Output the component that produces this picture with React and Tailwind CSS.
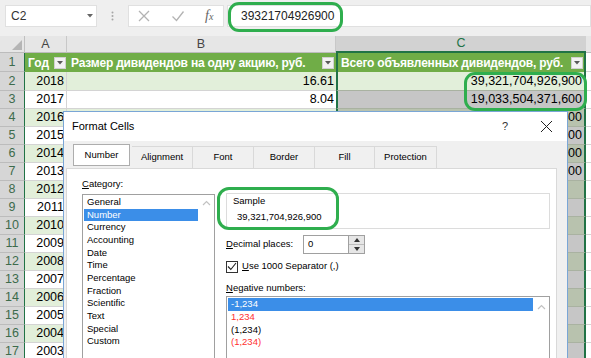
import React from 'react';

const data = [
  ['2018', '16.61', '39,321,704,926,900'],
  ['2017', '8.04', '19,033,504,371,600'],
  ['2016', '8.04', '19,032,795,363,600'],
  ['2015', '7.89', '18,678,401,678,100'],
  ['2014', '7.20', '17,044,929,288,000'],
  ['2013', '7.20', '17,044,929,288,000'],
  ['2012', '5.99', ''],
  ['2011', '8.97', ''],
  ['2010', '3.85', ''],
  ['2009', '2.39', ''],
  ['2008', '0.36', ''],
  ['2007', '2.66', ''],
  ['2006', '2.54', ''],
  ['2005', '1.50', ''],
  ['2004', '1.19', ''],
  ['2003', '0.69', ''],
];

function FilterBtn() {
  return (
    <div className="w-[12px] h-[12px] bg-[#f2f2f2] border border-[#d0d0d0] flex items-center justify-center shrink-0">
      <svg width="6" height="4" viewBox="0 0 6 4"><path d="M0 0h6L3 3.5z" fill="#595959" /></svg>
    </div>
  );
}

function UpChevron() {
  return (
    <svg width="9" height="6" viewBox="0 0 9 6"><path d="M1 5l3.5-3.5L8 5" fill="none" stroke="#c2c2c2" strokeWidth="1.2" /></svg>
  );
}

function Row({ n, year, b, c, h }) {
  const band = n % 2 === 0;
  const abBg = band ? 'bg-[#e2efda]' : 'bg-white';
  const cBg = n === 2 ? 'bg-[#e2efda]' : band ? 'bg-[#b8c2ae]' : 'bg-[#c6c6c6]';
  return (
    <div className={`flex ${h}`}>
      <div className="w-[25px] shrink-0 bg-[#d6d6d6] text-[#3d6b4c] border-r border-r-[#217346] border-b border-b-[#bcbcbc] flex items-center justify-center text-[12.5px]">{n}</div>
      <div className={`w-[42px] shrink-0 ${abBg} border-r border-r-[#d4d4d4] border-b border-b-[#d4d4d4] flex items-center justify-end pr-[2px] text-[12.5px]`}>{year}</div>
      <div className={`w-[269px] shrink-0 ${abBg} border-b border-b-[#d4d4d4] flex items-center justify-end pr-[2px] text-[12.5px]`}>{b}</div>
      <div className={`w-[250px] shrink-0 ${cBg} border-l-2 border-l-[#217346] border-r-2 border-r-[#217346] border-b border-b-[#a9b2a1] flex items-center justify-end pr-[2px] text-[12.5px]`}>{c}</div>
      <div className="flex-1 bg-white border-b border-b-[#d4d4d4]"></div>
    </div>
  );
}

export default function App() {
  return (
    <div className="relative w-[591px] h-[358px] overflow-hidden bg-white font-['Liberation_Sans',sans-serif] text-black">
      {/* formula bar */}
      <div className="h-[36px] bg-[#efefef] flex items-start pt-[5px] pl-[5px]">
        <div className="w-[92px] h-[22px] bg-white border border-[#e0e0e0] flex items-center justify-between pl-[5px] pr-[3px] text-[12px] text-[#333]">
          <span>C2</span>
          <svg width="6" height="4" viewBox="0 0 6 4"><path d="M0 0h6L3 3.5z" fill="#666" /></svg>
        </div>
        <div className="w-[31px] h-[22px] flex items-center justify-center">
          <svg width="3" height="10" viewBox="0 0 3 10"><circle cx="1.5" cy="1.5" r="1" fill="#a6a6a6" /><circle cx="1.5" cy="5" r="1" fill="#a6a6a6" /><circle cx="1.5" cy="8.5" r="1" fill="#a6a6a6" /></svg>
        </div>
        <div className="w-[96px] h-[22px] bg-white border border-[#e0e0e0] flex items-center pl-[8px] gap-[20px]">
          <svg width="14" height="14" viewBox="0 0 14 14"><path d="M2 2l10 10M12 2L2 12" stroke="#b3b3b3" strokeWidth="1.3" /></svg>
          <svg width="14" height="14" viewBox="0 0 14 14"><path d="M1.5 7.5l4 4L12.5 2.5" fill="none" stroke="#b3b3b3" strokeWidth="1.3" /></svg>
          <span className="font-['Liberation_Serif',serif] italic text-[14px] text-[#666] leading-none">f<span className="text-[10px]">x</span></span>
        </div>
        <div className="w-[3px]"></div>
        <div className="flex-1 h-[22px] bg-white border border-[#e0e0e0] flex items-center pl-[13px] text-[12px] text-[#222]">39321704926900</div>
      </div>
      {/* column headers */}
      <div className="flex h-[17px] text-[12.5px] text-[#444]">
        <div className="w-[25px] shrink-0 bg-[#e6e6e6] border-r border-[#c0c0c0] border-b border-b-[#bcbcbc] relative">
          <svg className="absolute right-[2px] bottom-[2px]" width="10" height="10" viewBox="0 0 10 10"><path d="M10 0V10H0z" fill="#b5b5b5" /></svg>
        </div>
        <div className="w-[42px] shrink-0 bg-[#e6e6e6] border-r border-[#c8c8c8] border-b border-b-[#bcbcbc] flex items-center justify-center">A</div>
        <div className="w-[269px] shrink-0 bg-[#e6e6e6] border-r border-[#c8c8c8] border-b border-b-[#bcbcbc] flex items-center justify-center">B</div>
        <div className="w-[250px] shrink-0 bg-[#d2d2d2] border-b-2 border-b-[#217346] flex items-center justify-center text-[#217346]">C</div>
        <div className="flex-1 bg-[#e6e6e6] border-b border-b-[#bcbcbc]"></div>
      </div>
      {/* row 1 */}
      <div className="flex h-[19px]">
        <div className="w-[25px] shrink-0 bg-[#d6d6d6] text-[#3d6b4c] border-r border-r-[#217346] border-b border-b-[#bcbcbc] flex items-center justify-center text-[12.5px]">1</div>
        <div className="w-[42px] shrink-0 bg-[#70ad47] flex items-center justify-between pl-[3px] pr-[1px] text-white font-bold text-[12px]">
          <span>Год</span><FilterBtn />
        </div>
        <div className="w-[269px] shrink-0 bg-[#70ad47] flex items-center justify-between pl-[4px] pr-[2px] text-white font-bold text-[12px] tracking-[-0.2px]">
          <span>Размер дивидендов на одну акцию, руб.</span><FilterBtn />
        </div>
        <div className="w-[250px] shrink-0 bg-[#70ad47] border-l-2 border-l-[#217346] border-r-2 border-r-[#217346] flex items-center justify-between pl-[3px] pr-[1px] text-white font-bold text-[12px] tracking-[-0.2px]">
          <span>Всего объявленных дивидендов, руб.</span><FilterBtn />
        </div>
        <div className="flex-1 bg-white border-b border-b-[#d4d4d4]"></div>
      </div>
      {data.map((r, i) => (
        <Row key={i} n={i + 2} year={r[0]} b={r[1]} c={r[2]} h={i === 0 ? 'h-[19px]' : 'h-[18px]'} />
      ))}

      {/* Format Cells dialog */}
      <div className="absolute left-[63px] top-[111px] w-[505px] h-[260px] border border-[#7aa6d6] bg-[#f0f0f0] text-[9.5px] text-black">
        <div className="h-[29px] bg-white flex items-center justify-between pl-[8px] pr-[14px]">
          <span className="text-[11px]">Format Cells</span>
          <div className="flex items-center gap-[32px]">
            <span className="text-[11px] text-[#333]">?</span>
            <svg width="13" height="13" viewBox="0 0 13 13"><path d="M1 1l11 11M12 1L1 12" stroke="#222" strokeWidth="1" /></svg>
          </div>
        </div>
        <div className="h-[27px] flex items-end pl-[9px]">
          <div className="h-[22px] w-[57px] bg-white border border-[#adadad] flex items-center justify-center mb-[2px] mr-[2px]">Number</div>
          <div className="h-[22px] w-[61px] border-t border-r border-[#d9d9d9] flex items-center justify-center">Alignment</div>
          <div className="h-[22px] w-[61px] border-t border-r border-[#d9d9d9] flex items-center justify-center">Font</div>
          <div className="h-[22px] w-[61px] border-t border-r border-[#d9d9d9] flex items-center justify-center">Border</div>
          <div className="h-[22px] w-[60px] border-t border-r border-[#d9d9d9] flex items-center justify-center">Fill</div>
          <div className="h-[22px] w-[62px] border-t border-r border-[#d9d9d9] flex items-center justify-center">Protection</div>
        </div>
        <div className="ml-[2px] w-[491px] h-[220px] bg-white border border-[#d9d9d9] flex pl-[15px] pt-[9px] gap-[11px]">
          <div className="w-[133px] shrink-0 flex flex-col">
            <div className="h-[13px] flex items-center"><span><span className="underline">C</span>ategory:</span></div>
            <div className="mt-[3px] h-[200px] border border-[#a0a0a0] flex">
              <div className="flex-1 flex flex-col pt-[1px] pl-[1px]">
                {['General', 'Number', 'Currency', 'Accounting', 'Date', 'Time', 'Percentage', 'Fraction', 'Scientific', 'Text', 'Special', 'Custom'].map((t) => (
                  <div key={t} className={`h-[12.65px] flex items-center pl-[3px] ${t === 'Number' ? 'bg-[#3b8ee8] text-white' : ''}`}>{t}</div>
                ))}
              </div>
              <div className="w-[16px] flex justify-center pt-[5px]"><UpChevron /></div>
            </div>
          </div>
          <div className="w-[324px] shrink-0 flex flex-col pt-[15px]">
            <div className="h-[36px] border border-[#dcdcdc] flex flex-col pl-[6px] pt-[1px]">
              <div className="h-[12px] flex items-center">Sample</div>
              <div className="h-[20px] flex items-center pl-[4px]">39,321,704,926,900</div>
            </div>
            <div className="mt-[6px] h-[19px] flex items-center">
              <span className="w-[77px]"><span className="underline">D</span>ecimal places:</span>
              <div className="w-[46px] h-[19px] border border-[#a0a0a0] bg-white flex items-center pl-[4px]">0</div>
              <div className="w-[16px] h-[19px] border border-l-0 border-[#a0a0a0] flex flex-col">
                <div className="flex-1 bg-[#e6e6e6] border-b border-[#bdbdbd] flex items-center justify-center">
                  <svg width="6" height="4" viewBox="0 0 6 4"><path d="M0 4h6L3 0z" fill="#333" /></svg>
                </div>
                <div className="flex-1 bg-[#e6e6e6] flex items-center justify-center">
                  <svg width="6" height="4" viewBox="0 0 6 4"><path d="M0 0h6L3 4z" fill="#333" /></svg>
                </div>
              </div>
            </div>
            <div className="mt-[6px] h-[13px] flex items-center gap-[4px]">
              <div className="w-[12px] h-[12px] border border-[#333] bg-white flex items-center justify-center">
                <svg width="10" height="9" viewBox="0 0 10 9"><path d="M1 4.5l2.8 3L9 1" fill="none" stroke="#222" strokeWidth="1.1" /></svg>
              </div>
              <span><span className="underline">U</span>se 1000 Separator (,)</span>
            </div>
            <div className="mt-[9px] h-[13px] flex items-center"><span><span className="underline">N</span>egative numbers:</span></div>
            <div className="mt-[1px] h-[80px] w-[324px] border border-[#a0a0a0] flex">
              <div className="flex-1 flex flex-col pt-[1px] pl-[1px]">
                <div className="h-[13px] bg-[#3b8ee8] text-white flex items-center pl-[3px]">-1,234</div>
                <div className="h-[12.5px] text-[#ff3030] flex items-center pl-[3px]">1,234</div>
                <div className="h-[12.5px] flex items-center pl-[3px]">(1,234)</div>
                <div className="h-[12.5px] text-[#ff3030] flex items-center pl-[3px]">(1,234)</div>
              </div>
              <div className="w-[16px] flex justify-center pt-[7px]"><UpChevron /></div>
            </div>
          </div>
        </div>
      </div>

      {/* green annotation outlines */}
      <div className="absolute left-[228px] top-[2px] w-[115px] h-[30px] border-[3px] border-[#2fae4e] rounded-[11px]"></div>
      <div className="absolute left-[464px] top-[72px] w-[123px] h-[39px] border-[3px] border-[#2fae4e] rounded-[11px]"></div>
      <div className="absolute left-[217px] top-[187px] w-[122px] h-[43px] border-[3px] border-[#2fae4e] rounded-[12px]"></div>
    </div>
  );
}
